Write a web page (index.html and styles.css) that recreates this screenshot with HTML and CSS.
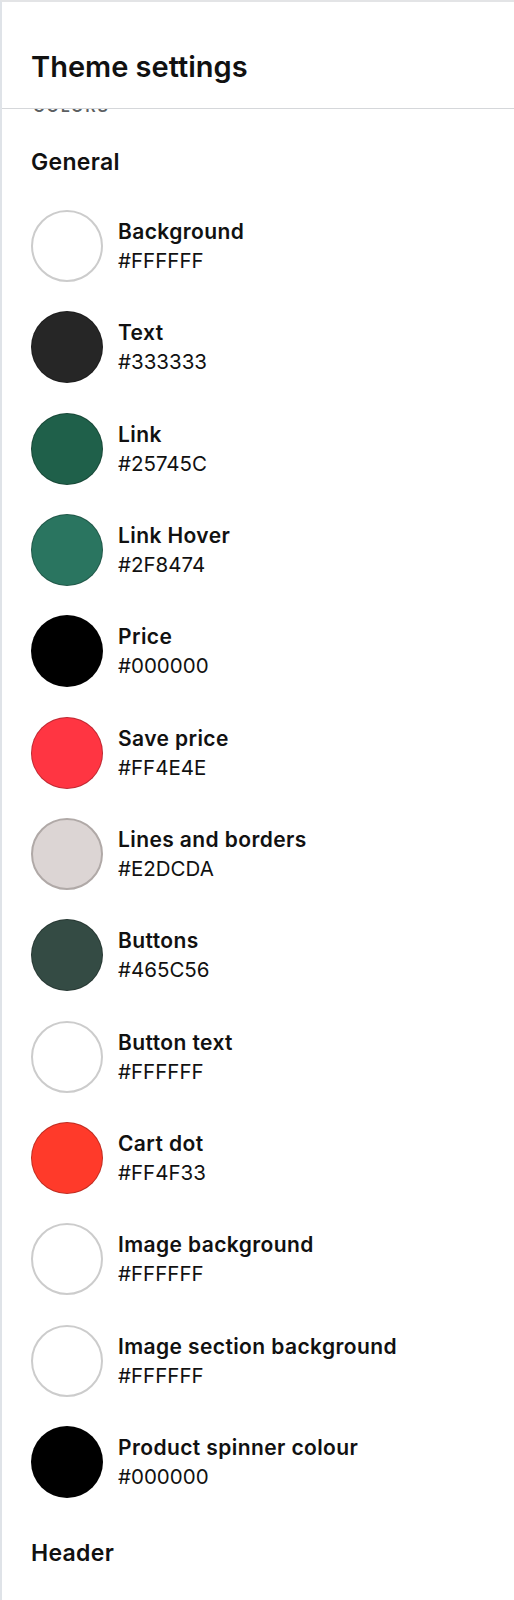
FILE: index.html
```html
<!DOCTYPE html>
<html lang="en">
<head>
    <meta charset="UTF-8">
    <meta name="viewport" content="width=device-width, initial-scale=1.0">
    <title>Theme settings</title>
    <link rel="stylesheet" href="styles.css">
</head>
<body>

<div class="panel">
    <div class="panel-header">
        <h1>Theme settings</h1>
    </div>
    <div class="panel-body">
        <div class="scroll">
            <div class="group-label">Colors</div>

            <h2 class="section-title">General</h2>
            <ul class="swatches">
                <li><span class="dot light" style="background:#FFFFFF"></span><div class="info"><b>Background</b><span>#FFFFFF</span></div></li>
                <li><span class="dot" style="background:#262626"></span><div class="info"><b>Text</b><span>#333333</span></div></li>
                <li><span class="dot" style="background:#1f604a"></span><div class="info"><b>Link</b><span>#25745C</span></div></li>
                <li><span class="dot" style="background:#2a7560"></span><div class="info"><b>Link Hover</b><span>#2F8474</span></div></li>
                <li><span class="dot" style="background:#000000"></span><div class="info"><b>Price</b><span>#000000</span></div></li>
                <li><span class="dot" style="background:#ff3542"></span><div class="info"><b>Save price</b><span>#FF4E4E</span></div></li>
                <li><span class="dot grey" style="background:#dcd5d4"></span><div class="info"><b>Lines and borders</b><span>#E2DCDA</span></div></li>
                <li><span class="dot" style="background:#344b44"></span><div class="info"><b>Buttons</b><span>#465C56</span></div></li>
                <li><span class="dot light" style="background:#FFFFFF"></span><div class="info"><b>Button text</b><span>#FFFFFF</span></div></li>
                <li><span class="dot" style="background:#ff3a2a"></span><div class="info"><b>Cart dot</b><span>#FF4F33</span></div></li>
                <li><span class="dot light" style="background:#FFFFFF"></span><div class="info"><b>Image background</b><span>#FFFFFF</span></div></li>
                <li><span class="dot light" style="background:#FFFFFF"></span><div class="info"><b>Image section background</b><span>#FFFFFF</span></div></li>
                <li><span class="dot" style="background:#000000"></span><div class="info"><b>Product spinner colour</b><span>#000000</span></div></li>
            </ul>

            <h2 class="section-title header-title">Header</h2>
        </div>
    </div>
</div>

</body>
</html>
```

FILE: styles.css
```css
body {
    font-family: Inter, "Noto Sans", sans-serif;
    background-color: #ffffff;
    color: #111111;
    margin: 0;
}
.panel {
    border-left: 2px solid #dfe3e8;
    border-top: 2px solid #e3e4e6;
    min-height: 1598px;
}
.panel-header {
    height: 107px;
    box-sizing: border-box;
    border-bottom: 1px solid #d5d7da;
    padding: 47px 0 0 29px;
}
.panel-header h1 {
    margin: 0;
    font-size: 29px;
    line-height: 36px;
    font-weight: 600;
}
.panel-body {
    overflow: hidden;
    height: 1490px;
}
.scroll {
    margin-top: -13px;
    padding-left: 29px;
}
.group-label {
    font-size: 16px;
    line-height: 20px;
    font-weight: 600;
    text-transform: uppercase;
    letter-spacing: 1.8px;
    color: #5c5f62;
    padding-left: 2px;
}
.section-title {
    margin: 0;
    padding-top: 31px;
    font-size: 23px;
    line-height: 30px;
    font-weight: 600;
    letter-spacing: 0.3px;
}
.swatches {
    list-style-type: none;
    margin: 0;
    padding: 33px 0 0;
    display: flex;
    flex-direction: column;
    gap: 29.33px;
}
.swatches li {
    display: flex;
    align-items: center;
    gap: 15px;
}
.dot {
    width: 72px;
    height: 72px;
    border-radius: 50%;
    box-sizing: border-box;
    border: 1px solid rgba(0, 0, 0, 0.25);
    flex-shrink: 0;
}
.dot.light {
    border: 2px solid #cccccc;
}
.dot.grey {
    border: 2px solid #b0a9a7;
}
.info {
    display: flex;
    flex-direction: column;
    font-size: 20.5px;
    line-height: 29px;
}
.info b {
    font-size: 21px;
    font-weight: 600;
    letter-spacing: 0.4px;
}
.header-title {
    padding-top: 40px;
}
```
